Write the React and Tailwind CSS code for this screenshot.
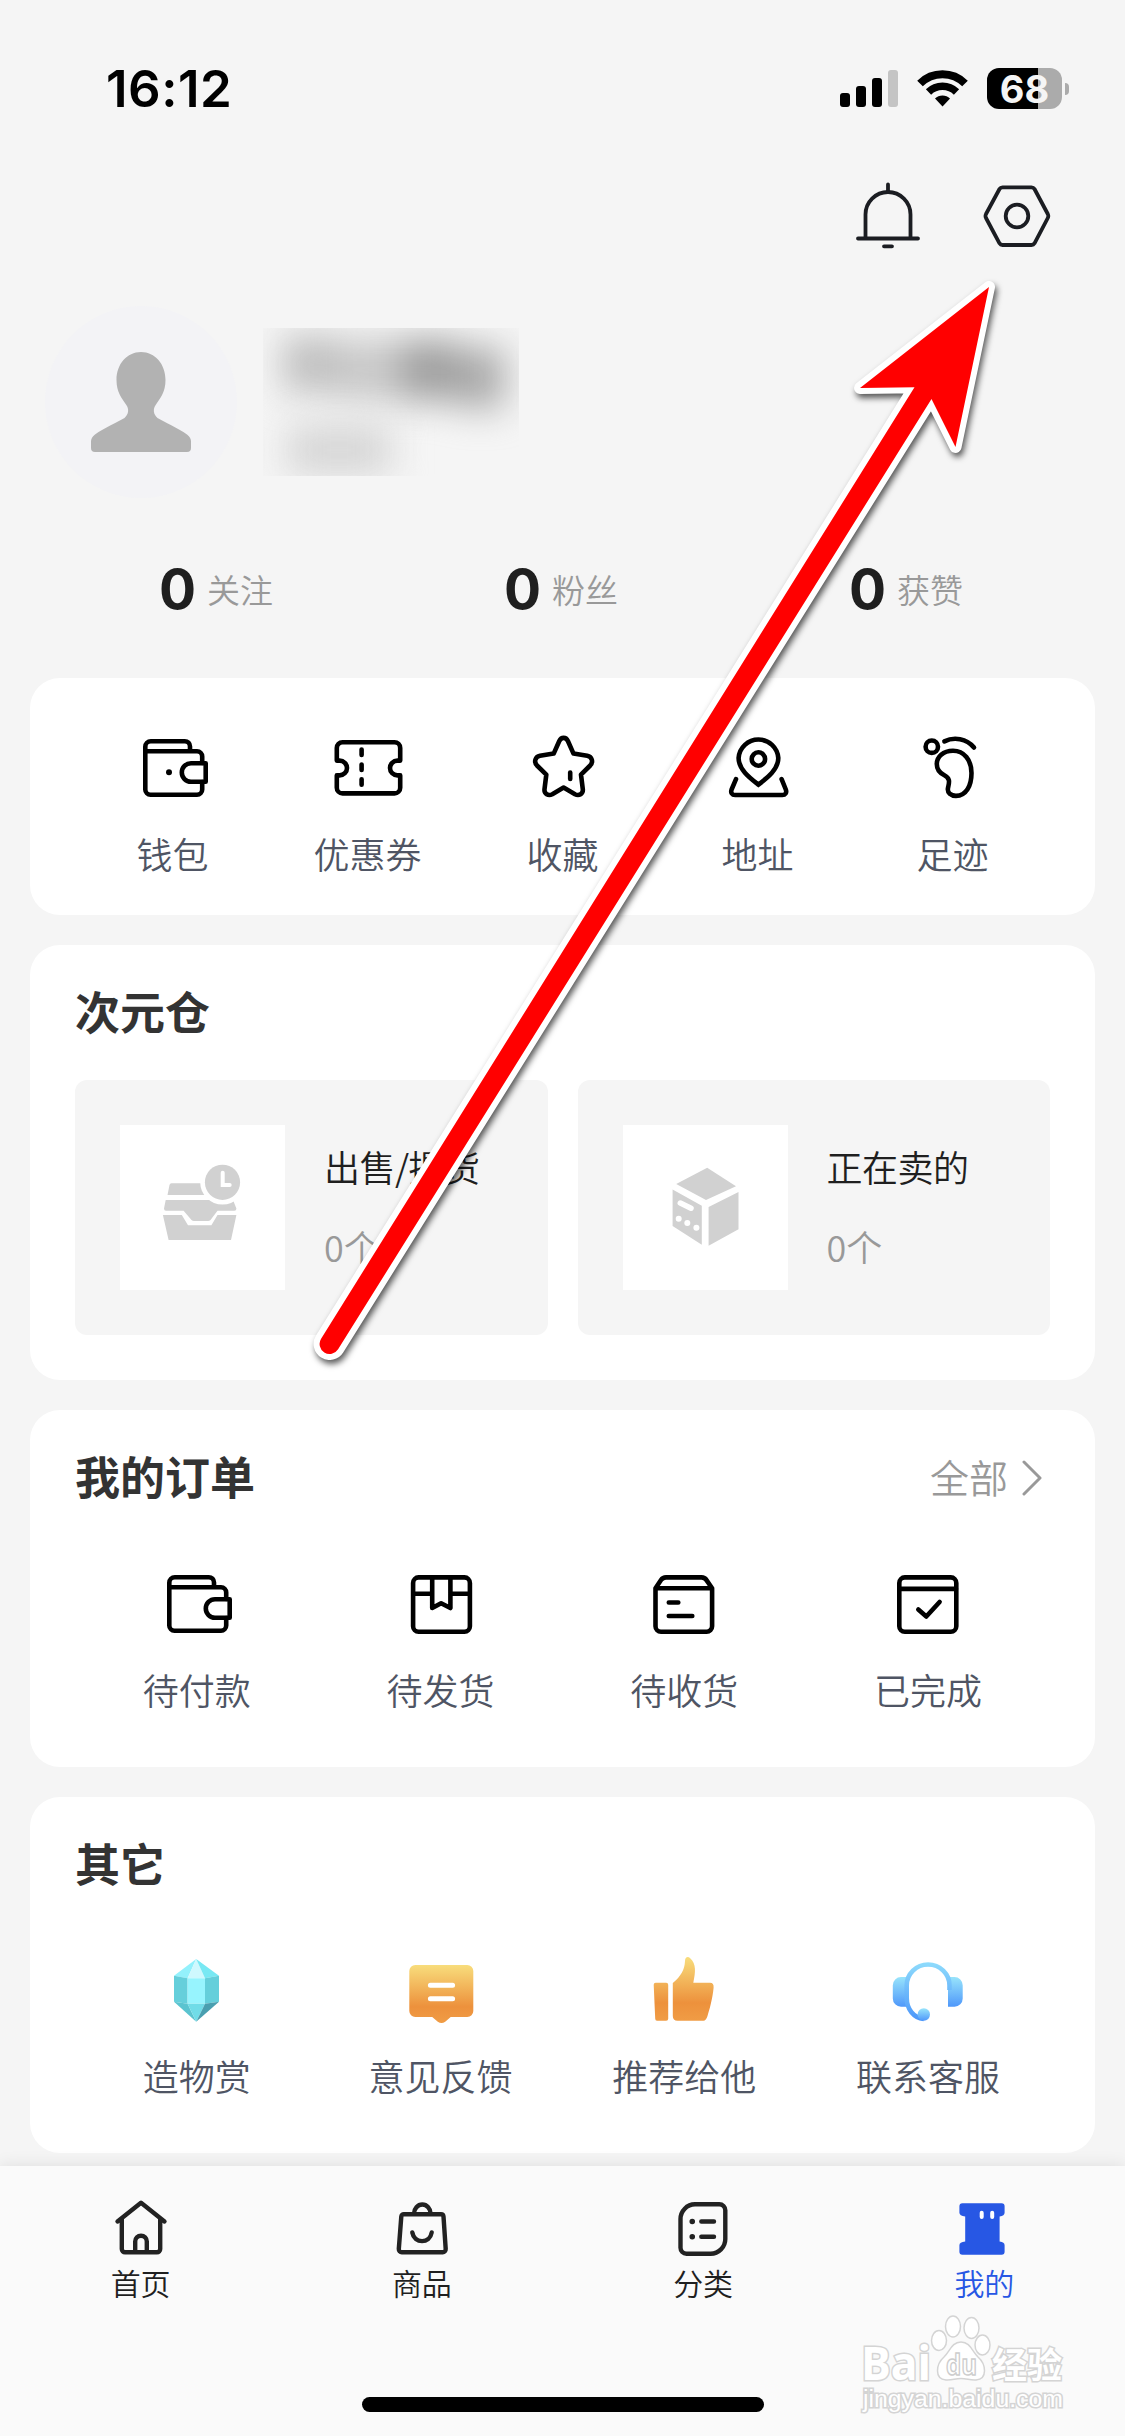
const line = {
  fill: "none",
  stroke: "#000",
  strokeWidth: 4.6,
  strokeLinecap: "round",
  strokeLinejoin: "round",
};

function Icon({ children }) {
  return (
    <svg viewBox="0 0 72 72" className="w-[72px] h-[72px] overflow-visible" {...line}>
      {children}
    </svg>
  );
}

function WalletIcon({ dot }) {
  return (
    <Icon>
      <path d="M53 18.5V14.4a5.2 5.2 0 0 0-5.2-5.2H13.8a5.5 5.5 0 0 0-5.5 5.5V57.5a5.2 5.2 0 0 0 5.2 5.2H60a5.2 5.2 0 0 0 5.2-5.2V50M65.2 31V24.5a5.2 5.2 0 0 0-5.2-5.2H9" />
      <path d="M68.7 31.3H54a9.2 9.2 0 0 0 0 18.4h14.7z" />
      {dot && <circle cx="32" cy="40.3" r="3" fill="#000" stroke="none" />}
    </Icon>
  );
}

const TicketIcon = () => (
  <Icon>
    <path d="M4.8 28.6V16a5.7 5.7 0 0 1 5.7-5.7h52a5.7 5.7 0 0 1 5.7 5.7v12.6h-2.8a7.4 7.4 0 0 0 0 14.8h2.8v12.3a5.7 5.7 0 0 1-5.7 5.7h-52a5.7 5.7 0 0 1-5.7-5.7V43.4h2.8a7.4 7.4 0 0 0 0-14.8z" />
    <path d="M29.6 17.5V23M29.6 32.5V38M29.6 47.3v5.4" />
  </Icon>
);

const StarIcon = () => (
  <Icon>
    <path d="M32.3 9c2-4.2 6.6-4.2 8.6 0l5.6 12.6 13.7 2.2c4.8 1 6.4 6 3 9.7L54 42.6 55.8 57.2c.5 4.7-3.8 7-7.8 5L36.6 55.6 25.3 62.2c-4 2-8.3-.3-7.8-5l1.8-14.6-9.3-9.1c-3.4-3.7-1.8-8.7 3-9.7l13.7-2.2z" />
    <path d="M43.2 40.5V47" />
  </Icon>
);

const AddressIcon = () => (
  <Icon>
    <path strokeLinejoin="miter" d="M36.4 52.6C28 46 16.6 37.5 16.6 26a19.9 19.9 0 0 1 39.7 0C56.3 37.5 45 46 36.4 52.6z" />
    <circle cx="36.4" cy="27" r="6.7" />
    <path d="M14 47.2 9.6 57.5c-1.2 3.2.5 5.5 3.5 5.5h47.2c3 0 4.7-2.3 3.5-5.5L59.6 47.2" />
  </Icon>
);

const FootIcon = () => (
  <Icon>
    <circle cx="14.8" cy="14.7" r="6.2" />
    <path d="M27.4 9.4C37 4.5 49.5 6.5 57 15.5" />
    <path d="M36 18.8C26 18.8 19.8 25 19.8 32c0 6 3.2 9 7.2 11 7 3.5 5 8 4 13-1 5 3 7.9 8 7.9 10 0 15.5-9.9 15.5-22.9S47 18.8 36 18.8z" />
  </Icon>
);

const ShipIcon = () => (
  <Icon>
    <rect x="8.1" y="9.4" width="56.8" height="54.4" rx="5.5" />
    <path d="M8.5 25.7H27M45.6 25.7h19M27.2 10V40l8.9-4.8L45.4 40V10" />
  </Icon>
);

const ReceiveIcon = () => (
  <Icon>
    <path d="M7.5 20.3v38a5.5 5.5 0 0 0 5.5 5.5h45.6a5.5 5.5 0 0 0 5.5-5.5v-38l-5.6-8.2a6 6 0 0 0-5-2.7H18a6 6 0 0 0-5 2.7zM8 20.3h56M20.8 34.5h9.5M20.8 48h23.5" />
  </Icon>
);

const DoneIcon = () => (
  <Icon>
    <rect x="7.3" y="9.4" width="57" height="54.4" rx="5.5" />
    <path d="M8 20.9h56M26.3 41.5l8 7L47.6 34" />
  </Icon>
);

const GemIcon = () => (
  <Icon>
    <g stroke="none">
      <path d="M35.2 5 13 21.7l13.6 2.6z" fill="#93f1fc" />
      <path d="M35.2 5 26.6 24.3H44z" fill="#cff8fe" />
      <path d="M35.2 5 58 21.7 44 24.3z" fill="#78e8f3" />
      <path d="M13 21.7l13.6 2.6v25.4L13 47.7z" fill="#65cfdb" />
      <path d="M26.6 24.3H44v25.4H26.6z" fill="#97f4fe" />
      <path d="M44 24.3 58 21.7v26l-14 2z" fill="#65cfdb" />
      <path d="M13 47.7l13.6 2 8.6 18z" fill="#5bc4d0" />
      <path d="M26.6 49.7H44l-8.8 18z" fill="#70dce8" />
      <path d="M44 49.7l14-2-22.8 20z" fill="#4a9fb0" />
    </g>
  </Icon>
);

function OrangeGradient({ id }) {
  return (
    <linearGradient id={id} x1="0" y1="0" x2="0" y2="1">
      <stop offset="0" stopColor="#f8dd7c" />
      <stop offset="0.72" stopColor="#ed913c" />
      <stop offset="1" stopColor="#f09c45" />
    </linearGradient>
  );
}

const FeedbackIcon = () => (
  <Icon>
    <defs><OrangeGradient id="feedback" /></defs>
    <path stroke="none" fill="url(#feedback)" d="M10.3 11h52a6 6 0 0 1 6 6v40a6 6 0 0 1-6 6H45.7l-5.5 4.7q-3.7 2.6-7.4 0L27.2 63H10.3a6 6 0 0 1-6-6V17a6 6 0 0 1 6-6z" />
    <path stroke="#fff" strokeWidth="5" d="M25.4 31.3h22.2M25.4 44.7h22.2" />
  </Icon>
);

const ThumbIcon = () => (
  <Icon>
    <defs><OrangeGradient id="thumb" /></defs>
    <path
      stroke="none"
      fill="url(#thumb)"
      d="M7.7 28.7h10.5q2 0 2 2v34q0 2-2 2H9q-1.7 0-1.8-2l-1.5-34q0-2 2-2zM24.8 29C33 22 36.6 16 37 7c0-4 3-5 5.2-2.8C48.5 10 47.5 18 45.3 28.7H62q4 0 3.6 5C64.6 45 61 57 59.5 62q-1.5 4.7-4 4.7h-26q-4.7 0-4.7-4.7z"
    />
  </Icon>
);

const HeadsetIcon = () => (
  <Icon>
    <defs>
      <linearGradient id="pad" x1="0" y1="0" x2="0" y2="1">
        <stop offset="0" stopColor="#98e4fb" />
        <stop offset="1" stopColor="#4f98fa" />
      </linearGradient>
      <linearGradient id="band" gradientUnits="userSpaceOnUse" x1="0" y1="8" x2="0" y2="66">
        <stop offset="0" stopColor="#8fdcfc" />
        <stop offset="1" stopColor="#4c97fa" />
      </linearGradient>
    </defs>
    <path stroke="none" fill="url(#pad)" d="M15.5 23H9A8.2 8.2 0 0 0 .8 31.2v13.3A8.2 8.2 0 0 0 9 52.7h6.5zM56 23h6.5a8.2 8.2 0 0 1 8.2 8.2v13.3a8.2 8.2 0 0 1-8.2 8.2H56z" />
    <path stroke="url(#band)" strokeLinecap="butt" d="M57.5 36V31.5a21.4 21 0 0 0-42.8 0V44c0 11 7 20 17 21" />
    <circle cx="31.8" cy="60.5" r="6.2" stroke="none" fill="url(#pad)" />
  </Icon>
);

const TrayIcon = () => (
  <svg viewBox="0 0 165 165" className="w-[165px] h-[165px] bg-white" fill="#d1d1d1">
    <path d="M51.5 58.3H90V70H47.5l2-10q.4-1.7 2-1.7zM45.7 75H113l3.4 8.5q0 2.2-2 2.2H97.5L90.5 95q-1 1-2.5 1H74q-1.5 0-2.5-1l-7.9-9.3H46q-2 0-2-2.2z" />
    <path d="M42.9 90h18.9L68 100.3h23.4L97.5 90h18.9L111 115H48.6z" />
    <circle cx="102.5" cy="57.3" r="22.3" fill="#fff" />
    <circle cx="102.5" cy="57.3" r="17.6" />
    <path d="M102.7 47.7V60h7" fill="none" stroke="#fff" strokeWidth="4" strokeLinecap="round" />
  </svg>
);

const CubeIcon = () => (
  <svg viewBox="0 0 165 165" className="w-[165px] h-[165px] bg-white" fill="#d1d1d1">
    <path d="M84.2 42.7 113 61.2 83 75 53.2 59zM49.6 64.5l29.2 16.2v39L49.6 101zM85.6 82 115.5 67v37.300l-29.900 16.400z" />
    <path d="M57.3 78l10.7 5.2" stroke="#fff" strokeWidth="5.5" strokeLinecap="round" />
    <g fill="#fff">
      <circle cx="55.7" cy="93.7" r="3" />
      <circle cx="64.3" cy="98" r="3" />
      <circle cx="73.4" cy="102.7" r="3" />
    </g>
  </svg>
);

function NavIcon({ children }) {
  return (
    <svg viewBox="0 0 60 60" className="w-[60px] h-[60px]" fill="none" stroke="#222" strokeWidth="4.4" strokeLinecap="round" strokeLinejoin="round">
      {children}
    </svg>
  );
}

const HomeIcon = () => (
  <NavIcon>
    <path d="M6.5 23.5 30 4.8l23.5 18.7M10.8 21v30a3.3 3.3 0 0 0 3.3 3.3h31.8a3.3 3.3 0 0 0 3.3-3.3V21M24.2 54V43.5a5.8 5.8 0 0 1 11.6 0V54" />
  </NavIcon>
);

const BagIcon = () => (
  <NavIcon>
    <path d="M12 16.2h37a2.5 2.5 0 0 1 2.5 2.3l2.2 32.5a3 3 0 0 1-3 3.2H9.8a3 3 0 0 1-3-3.2L9.3 18.5a2.5 2.5 0 0 1 2.7-2.3zM22 15.5a8.3 9 0 0 1 16.6 0M20.3 34.5c2 11.5 17.5 11.5 19.4 0" />
  </NavIcon>
);

const ListIcon = () => (
  <NavIcon>
    <path d="M22 6.3h24.3a6 6 0 0 1 6 6V41a14.7 14.7 0 0 1-14.7 14.7H13.5a6 6 0 0 1-6-6V21A14.7 14.7 0 0 1 22 6.3zM28.3 23.5H41M28.3 38.7H41" />
    <path strokeWidth="5.5" d="M19.2 23.5h.1M19.2 38.7h.1" />
  </NavIcon>
);

const MineIcon = () => (
  <NavIcon>
    <path stroke="none" fill="#2757e4" d="M8.4 5.3h39.2q3 0 3 3v6.5q0 3-5 3.7v25q5 .7 5 3.7v6.500q0 3-3 3H8.400q-3 0-3-3v-6.500q0-3 5.800-3.700v-25q-5.800-.700-5.800-3.700V8.300q0-3 3-3z" />
    <path stroke="#fff" strokeWidth="4" d="M27.7 14.7v4.2M38.2 14.7v4.2" />
  </NavIcon>
);

const STATS = ["关注", "粉丝", "获赞"];

const TOOLS = [
  { label: "钱包", icon: <WalletIcon dot /> },
  { label: "优惠券", icon: <TicketIcon /> },
  { label: "收藏", icon: <StarIcon /> },
  { label: "地址", icon: <AddressIcon /> },
  { label: "足迹", icon: <FootIcon /> },
];

const STORAGE = [
  { label: "出售/提货", icon: <TrayIcon /> },
  { label: "正在卖的", icon: <CubeIcon /> },
];

const ORDERS = [
  { label: "待付款", icon: <WalletIcon /> },
  { label: "待发货", icon: <ShipIcon /> },
  { label: "待收货", icon: <ReceiveIcon /> },
  { label: "已完成", icon: <DoneIcon /> },
];

const OTHERS = [
  { label: "造物赏", icon: <GemIcon /> },
  { label: "意见反馈", icon: <FeedbackIcon /> },
  { label: "推荐给他", icon: <ThumbIcon /> },
  { label: "联系客服", icon: <HeadsetIcon /> },
];

const TABS = [
  { label: "首页", icon: <HomeIcon /> },
  { label: "商品", icon: <BagIcon /> },
  { label: "分类", icon: <ListIcon /> },
  { label: "我的", icon: <MineIcon />, active: true },
];

function StatusBar() {
  return (
    <div className="h-[150px] pl-[106px] pr-14 pt-[59px] flex justify-between items-start">
      <span className="font-[Inter] font-semibold text-[51px] leading-[60px] tracking-[0.5px] text-black">16:12</span>
      <div className="flex items-start pt-[9px]">
        <svg viewBox="0 0 58 41" className="w-[58px] h-[41px] mr-[19px]">
          <rect x="0" y="25" width="10" height="14" rx="3" />
          <rect x="16" y="18" width="10" height="21" rx="3" />
          <rect x="32" y="10" width="10" height="29" rx="3" />
          <rect x="48" y="2" width="10" height="37" rx="3" fill="#c4c4c4" />
        </svg>
        <svg viewBox="0 0 51 41" className="w-[51px] h-[41px] mr-[19px]" fill="none" stroke="#000">
          <path d="M3 15.5a32 32 0 0 1 45 0" strokeWidth="8" />
          <path d="M11.5 24a20 20 0 0 1 28 0" strokeWidth="7.5" />
          <path d="M25.5 38.5 18 30.5a10.6 10.6 0 0 1 15 0z" fill="#000" stroke="none" />
        </svg>
        <div className="w-[75px] h-[41px] rounded-[12px] bg-[linear-gradient(90deg,#000_51px,#ababab_51px)] flex items-center justify-center">
          <span className="font-[Inter] font-bold text-[38px] leading-none text-[#f5f5f5]">68</span>
        </div>
        <div className="w-1 h-3 ml-[3px] mt-[15px] rounded-r-full bg-[#ababab]" />
      </div>
    </div>
  );
}

function Heading({ children }) {
  return <h2 className="text-[45px] leading-[60px] font-bold text-[#333]">{children}</h2>;
}

function IconRow({ items }) {
  return (
    <div className="flex">
      {items.map((item) => (
        <div key={item.label} className="flex-1 flex flex-col items-center">
          {item.icon}
          <span className="mt-[22px] text-[36px] leading-[54px] font-[350] text-[#4f5564]">{item.label}</span>
        </div>
      ))}
    </div>
  );
}

function Watermark() {
  return (
    <svg viewBox="0 0 210 104" className="absolute left-[860px] top-[2312px] w-[210px] h-[104px]" fill="#fff" stroke="#d4d4d4" strokeWidth="1.5">
      <g fontFamily="'Open Sans','Noto Sans CJK SC',sans-serif" paintOrder="stroke" strokeWidth="3">
        <text x="1" y="68" fontSize="46" fontWeight="700" textLength="70" lengthAdjust="spacingAndGlyphs">Bai</text>
        <text x="132" y="66" fontSize="35" fontWeight="700" textLength="70" fontFamily="'Noto Sans CJK SC',sans-serif">经验</text>
        <text x="3" y="95" fontSize="23" textLength="200" lengthAdjust="spacingAndGlyphs" fontFamily="'Liberation Sans',sans-serif">jingyan.baidu.com</text>
      </g>
      <ellipse cx="79" cy="28.5" rx="7.5" ry="10" />
      <ellipse cx="93" cy="14.5" rx="7.5" ry="10.5" />
      <ellipse cx="111.5" cy="16" rx="7.5" ry="10.5" />
      <ellipse cx="122.5" cy="33" rx="7.5" ry="10" />
      <path d="M101 30c-9 0-11 9-17 15-8 7-10 22 2 23 6 .5 9-1.5 15-1.5s9 2 15 1.5c12-1 10-16 2-23-6-6-8-15-17-15z" />
      <text x="86" y="63" fontSize="28" fontWeight="700" textLength="31" lengthAdjust="spacingAndGlyphs" fontFamily="'Open Sans',sans-serif" stroke="#cdcdcd">du</text>
    </svg>
  );
}

export default function App() {
  return (
    <div className="relative w-[1125px] h-[2436px] overflow-hidden bg-[#f5f5f5] flex flex-col font-['Noto_Sans_CJK_SC',sans-serif]">
      <StatusBar />

      {/* Header actions */}
      <div className="h-[135px] pt-[30px] pr-[72px] flex justify-end gap-[58px]">
        <svg viewBox="0 0 70 72" className="w-[70px] h-[72px]" fill="none" stroke="#1b1d22" strokeWidth="3.8" strokeLinecap="round">
          <path d="M35 4.5V11M12.5 58V34.5a22.5 22.5 0 0 1 45 0V58M5 58.5h60M31 66.3h8" />
        </svg>
        <svg viewBox="0 0 72 72" className="w-[72px] h-[72px]" fill="none" stroke="#1b1d22" strokeWidth="3.8" strokeLinejoin="round">
          <path d="M21.5 7.3h29q2 0 3 1.7l13.3 25q1 2 0 4L53.5 63.3q-1 1.7-3 1.7h-29q-2 0-3-1.7L5 38q-1-2 0-4L18.5 9q1-1.7 3-1.7z" />
          <circle cx="36" cy="36" r="11.3" />
        </svg>
      </div>

      {/* Profile */}
      <div className="h-[213px] pl-[45px] pt-[21px] flex">
        <div className="w-48 h-48 rounded-full bg-[#f3f3f6] flex justify-center">
          <svg viewBox="0 0 100 100" className="w-[100px] h-[100px] mt-[46px]" fill="#b2b2b2">
            <path d="M50 0C36 0 25.5 12 25.5 28c0 12 5 18 9.5 24.5 3.5 4.5 2.5 10-1.5 13.5C27 70 13 76 4 82.5 1 85 0 87 0 89.5V96q0 4 4 4h92q4 0 4-4v-6.5c0-2.5-1-4.5-4-7C87 76 73 70 66.5 66c-4-3.5-5-9-1.5-13.5C69.5 46 74.5 40 74.5 28 74.5 12 64 0 50 0z" />
          </svg>
        </div>
        {/* Name and id are hidden behind a smudge */}
        <div className="ml-[26px] mt-[22px] w-64 h-[148px] overflow-hidden">
          <div className="ml-5 mt-2 h-[72px] flex blur-[18px]">
            <div className="w-[52px] h-14 bg-[#bebebe]" />
            <div className="w-[66px] h-[60px] mt-1 bg-[#c8c8c8]" />
            <div className="w-14 h-[60px] mt-1 bg-[#9e9e9e]" />
            <div className="w-[48px] h-[60px] mt-3 bg-[#aaa]" />
          </div>
          <div className="ml-6 mt-[18px] w-[104px] h-12 bg-[#d5d5d5] blur-[18px]" />
        </div>
      </div>

      {/* Stats */}
      <div className="h-[180px] px-11 pt-[61px] flex">
        {STATS.map((label) => (
          <div key={label} className="w-[345px] h-[60px] flex items-center pl-[115px]">
            <span className="w-[48px] font-[Inter] text-[55px] leading-[60px] font-bold text-[#1f1f1f]">0</span>
            <span className="text-[33px] leading-[60px] font-[350] text-[#999]">{label}</span>
          </div>
        ))}
      </div>

      {/* Cards */}
      <div className="px-[30px] flex flex-col gap-[30px]">
        <section className="h-[237px] rounded-[30px] bg-white px-[45px] pt-[54px]">
          <IconRow items={TOOLS} />
        </section>

        <section className="h-[435px] rounded-[30px] bg-white px-[45px] pt-9">
          <Heading>次元仓</Heading>
          <div className="mt-[39px] flex gap-[30px]">
            {STORAGE.map((item) => (
              <div key={item.label} className="flex-1 h-[255px] rounded-[12px] bg-[#f5f5f5] p-[45px] flex gap-[39px]">
                {item.icon}
                <div className="flex flex-col whitespace-nowrap pt-[14px] gap-[26px] font-[350]">
                  <span className="text-[36px] leading-[54px] tracking-[-0.5px] text-[#1f1f1f]">{item.label}</span>
                  <span className="text-[36px] leading-[54px] text-[#999]">0个</span>
                </div>
              </div>
            ))}
          </div>
        </section>

        <section className="h-[357px] rounded-[30px] bg-white px-[45px] pt-9">
          <div className="flex justify-between mb-[62px]">
            <Heading>我的订单</Heading>
            <div className="flex items-center gap-[14px] pr-2 text-[#999]">
              <span className="text-[39px] leading-[60px] font-[350]">全部</span>
              <svg viewBox="0 0 20 36" className="w-5 h-9 mt-1" fill="none" stroke="currentColor" strokeWidth="3" strokeLinecap="round" strokeLinejoin="round">
                <path d="M2 2l16 16L2 34" />
              </svg>
            </div>
          </div>
          <IconRow items={ORDERS} />
        </section>

        <section className="h-[356px] rounded-[30px] bg-white px-[45px] pt-9">
          <div className="mb-[61px]">
            <Heading>其它</Heading>
          </div>
          <IconRow items={OTHERS} />
        </section>
      </div>

      {/* Tab bar */}
      <nav className="mt-auto h-[270px] shrink-0 bg-[#fafafa] shadow-[0_0_16px_rgba(0,0,0,0.1)] flex flex-col items-center">
        <div className="w-full pt-8 flex">
          {TABS.map((tab) => (
            <div key={tab.label} className="flex-1 flex flex-col items-center">
              {tab.icon}
              <span className={`mt-0.5 text-[30px] leading-[45px] font-[350] ${tab.active ? "text-[#2757e4]" : "text-[#1f1f1f]"}`}>
                {tab.label}
              </span>
            </div>
          ))}
        </div>
        <div className="mt-auto mb-6 w-[402px] h-[15px] rounded-full bg-black" />
      </nav>

      <Watermark />

      {/* Arrow pointing at the settings button */}
      <svg viewBox="0 0 1125 2436" className="absolute inset-0 w-[1125px] h-[2436px] pointer-events-none drop-shadow-[2px_4px_3px_rgba(0,0,0,0.65)]">
        <path
          d="M321.1 1338.7 914.5 387.3 860 388 989 287 955.5 447 931.5 399 338.1 1349.3A10 10 0 0 1 321.1 1338.7z"
          fill="#f00"
          stroke="#fff"
          strokeWidth="12"
          strokeLinejoin="round"
          paintOrder="stroke"
        />
      </svg>
    </div>
  );
}
